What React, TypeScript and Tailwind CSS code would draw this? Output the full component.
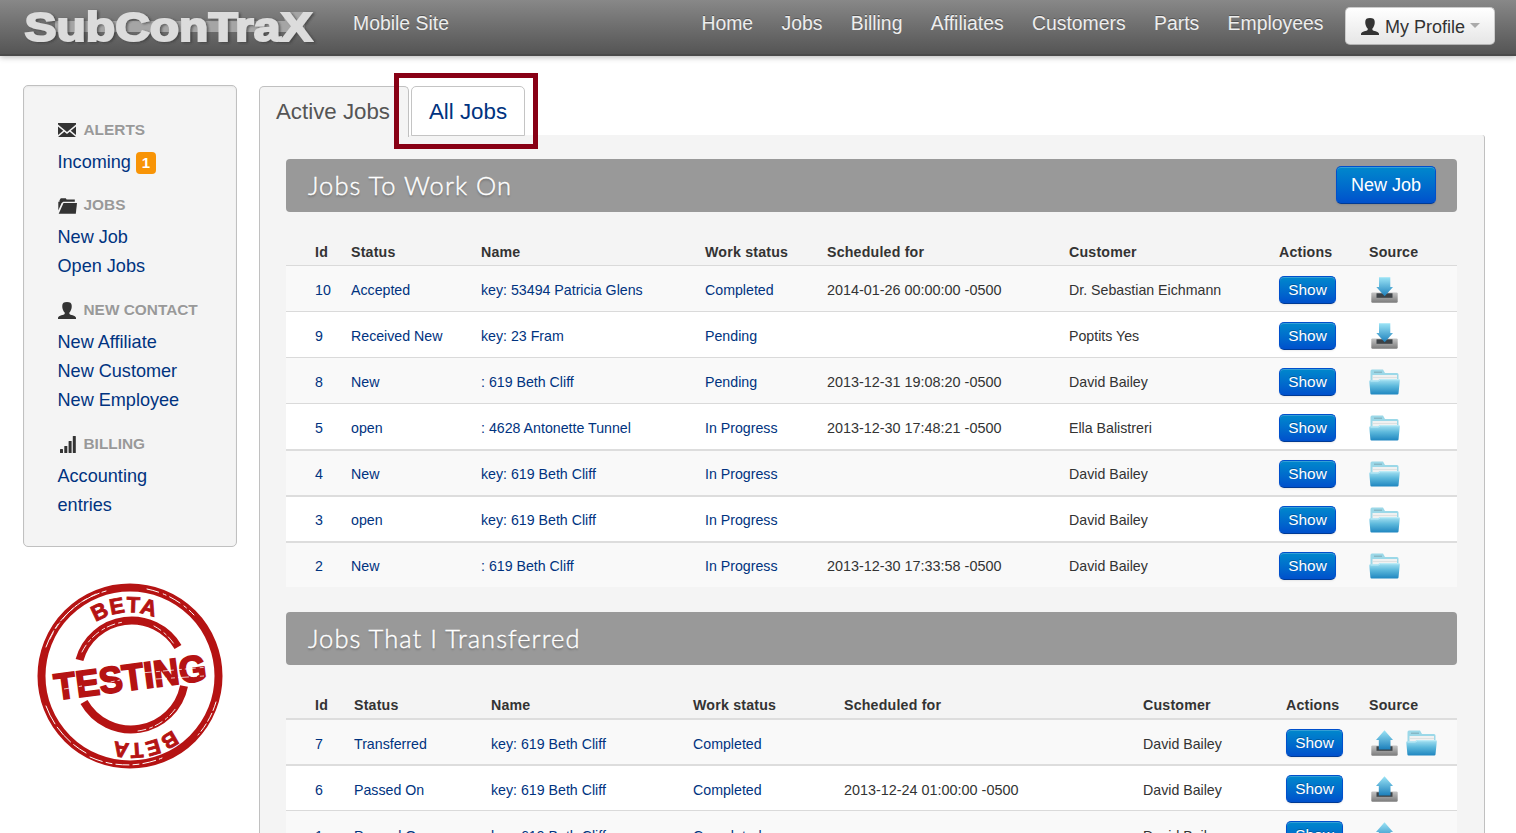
import React from "react";

type Source = "down" | "up" | "folder";
type Job = {
  id: string;
  status: string;
  name: string;
  work: string;
  date?: string;
  customer: string;
  source: Source[];
  line: string;
};

const thin = "border-t border-[#dadada]";
const thick = "border-t-2 border-[#dddddd]";

const working: Job[] = [
  { id: "10", status: "Accepted", name: "key: 53494 Patricia Glens", work: "Completed", date: "2014-01-26 00:00:00 -0500", customer: "Dr. Sebastian Eichmann", source: ["down"], line: thin },
  { id: "9", status: "Received New", name: "key: 23 Fram", work: "Pending", customer: "Poptits Yes", source: ["down"], line: thin },
  { id: "8", status: "New", name: ": 619 Beth Cliff", work: "Pending", date: "2013-12-31 19:08:20 -0500", customer: "David Bailey", source: ["folder"], line: thin },
  { id: "5", status: "open", name: ": 4628 Antonette Tunnel", work: "In Progress", date: "2013-12-30 17:48:21 -0500", customer: "Ella Balistreri", source: ["folder"], line: thin },
  { id: "4", status: "New", name: "key: 619 Beth Cliff", work: "In Progress", customer: "David Bailey", source: ["folder"], line: thick },
  { id: "3", status: "open", name: "key: 619 Beth Cliff", work: "In Progress", customer: "David Bailey", source: ["folder"], line: thick },
  { id: "2", status: "New", name: ": 619 Beth Cliff", work: "In Progress", date: "2013-12-30 17:33:58 -0500", customer: "David Bailey", source: ["folder"], line: thick },
];

const transferred: Job[] = [
  { id: "7", status: "Transferred", name: "key: 619 Beth Cliff", work: "Completed", customer: "David Bailey", source: ["up", "folder"], line: thick },
  { id: "6", status: "Passed On", name: "key: 619 Beth Cliff", work: "Completed", date: "2013-12-24 01:00:00 -0500", customer: "David Bailey", source: ["up"], line: thick },
  { id: "1", status: "Passed On", name: "key: 619 Beth Cliff", work: "Completed", customer: "David Bailey", source: ["up"], line: thin },
];

function UserIcon({ className }: { className: string }) {
  return (
    <svg viewBox="0 0 18 17" className={className} fill="#333">
      <path d="M4.300 3.500C4.300 1 6 0 9 0s4.700 1 4.700 3.500c0 .9.100 1.500-.1 2.400-.3 1.800-1.200 3.500-2.200 4.500v1.500c.5.900 6.200 1.500 6.600 3.800V17H0v-1.300c.5-2.300 6.200-2.900 6.700-3.800v-1.500C5.600 9.400 4.700 7.700 4.400 5.900c-.2-.9-.1-1.500-.1-2.400z" />
    </svg>
  );
}

function MailIcon() {
  return (
    <svg viewBox="0 0 18 14" className="h-[14px] w-[18px]" fill="#333">
      <path d="M0 0h18v1.500L9 9 0 1.500z" />
      <path d="M0 3.400 5.200 7.700 0 12zM18 3.400 12.800 7.700 18 12zM0 14l6.300-5.300L9 10.900l2.700-2.200L18 14z" />
    </svg>
  );
}

function DarkFolderIcon() {
  return (
    <svg viewBox="0 0 19 16" className="mt-[2px] h-4 w-[19px]" fill="#333">
      <path d="M1.500 2.200 2.800.3h5l.8 1.300h8.200v2.200H5.300L3.600 5 .3 12.500V3.800h1.200z" />
      <path d="M5.500 5.100H19l-1.200 10.600H.7z" />
    </svg>
  );
}

function BarsIcon() {
  return (
    <svg viewBox="0 0 16 17" className="h-[17px] w-4" fill="#333">
      <rect x="0" y="13" width="3" height="4" rx=".5" />
      <rect x="4.300" y="10" width="3" height="7" rx=".5" />
      <rect x="8.600" y="5" width="3" height="12" rx=".5" />
      <rect x="12.800" y="0" width="3" height="17" rx=".5" />
    </svg>
  );
}

function SourceIcon({ kind }: { kind: Source }) {
  if (kind === "folder")
    return (
      <svg viewBox="0 0 31 26" className="h-[26px] w-[31px] shrink-0">
        <defs>
          <linearGradient id="folderFront" x1="0" y1="0" x2="0" y2="1">
            <stop offset="0" stopColor="#a9e3f3" />
            <stop offset=".45" stopColor="#5db9dc" />
            <stop offset="1" stopColor="#1f86c0" />
          </linearGradient>
        </defs>
        <path d="M1.500 2.200Q1.500.5 3 .5H14L16 4H28Q29.500 4 29.500 5.500V20H1.500z" fill="#9bd8e8" />
        <path d="M5 3.200h8" stroke="#7fa9b5" />
        <path d="M3.500 6H28V13H3.500z" fill="#f0f1f1" />
        <path d="M3.500 8.500h24.500" stroke="#d9dddd" strokeWidth=".8" />
        <path d="M.3 12.500Q.3 11.300 1.500 11.300H9L11 10H29.500Q31 10 30.800 11.500L29.500 24.500Q29.400 25.500 28.300 25.500H2.500Q1.500 25.500 1.400 24.500z" fill="url(#folderFront)" />
        <path d="M1.500 12H9.300L11.300 10.700H30" fill="none" stroke="#c4eff8" strokeWidth=".9" />
      </svg>
    );
  return (
    <svg viewBox="0 0 31 26" className="h-[26px] w-[31px] shrink-0">
      <defs>
        <linearGradient id="arrowFill" x1="0" y1="0" x2="0" y2="1">
          <stop offset="0" stopColor="#9be4f6" />
          <stop offset="1" stopColor="#1c7fbb" />
        </linearGradient>
        <linearGradient id="trayFill" x1="0" y1="0" x2="0" y2="1">
          <stop offset="0" stopColor="#c4c4c4" />
          <stop offset="1" stopColor="#7b7b7b" />
        </linearGradient>
      </defs>
      <path d="M3.500 15.500H27.500Q28.500 15.500 28.700 16.500V24.500Q28.600 25.700 27.500 25.700H3.500Q2.300 25.700 2.300 24.500V16.500Q2.400 15.500 3.500 15.500z" fill="url(#trayFill)" />
      <rect x="7.500" y="16.300" width="16" height="4.500" fill="#3d4246" />
      {kind === "down" ? (
        <path d="M10 .3H21.300V10H24L15.700 19.300 7.300 10H10z" fill="url(#arrowFill)" />
      ) : (
        <path d="M15.500.3 24 10H21.500V19.500H9.800V10H7z" fill="url(#arrowFill)" />
      )}
    </svg>
  );
}

function Logo() {
  return (
    <svg viewBox="0 0 300 48" className="ml-[20px] h-12 w-[300px] shrink-0">
      <defs>
        <filter id="logoShadow" x="-5%" y="-20%" width="110%" height="150%">
          <feDropShadow dx="2" dy="1" stdDeviation="1" floodColor="#333" floodOpacity=".6" />
        </filter>
      </defs>
      <path d="M35 21H265L262 12H285V32H35z" fill="#a5a5a5" />
      <text x="4.500" y="41" textLength="288" lengthAdjust="spacingAndGlyphs" fontFamily="Liberation Sans, Arial, sans-serif" fontWeight="700" fontSize="41.500" fill="#dcdcdc" stroke="#dcdcdc" strokeWidth="2" filter="url(#logoShadow)">
        SubConTraX
      </text>
    </svg>
  );
}

function Stamp() {
  const face = "Liberation Sans, Arial, sans-serif";
  return (
    <svg viewBox="0 0 190 190" className="mt-[34px] ml-[13px] h-[190px] w-[190px]">
      <g fill="none" stroke="#b51313">
        <circle cx="94" cy="95" r="88.500" strokeWidth="8" />
        <path d="M43.500 79A54 54 0 0 1 142 66M48 121A54 54 0 0 0 148 105" strokeWidth="8" />
      </g>
      <g fill="none" stroke="#fff" strokeLinecap="round">
        <path d="M10 66A89 89 0 0 1 70 10" strokeWidth="1" strokeDasharray="18 3 5 4" />
        <path d="M14 58A90 90 0 0 1 60 13" strokeWidth=".8" strokeDasharray="7 5" />
        <path d="M111 8A89 89 0 0 1 158 34" strokeWidth="1" strokeDasharray="12 5 3 4" />
        <path d="M10 125A89 89 0 0 0 50 172" strokeWidth="1" strokeDasharray="20 4" />
        <path d="M54 176A91 91 0 0 0 126 177" strokeWidth="1" strokeDasharray="13 4 6 4" />
        <path d="M180 121A90 90 0 0 1 162 154" strokeWidth="1" strokeDasharray="9 3" />
        <path d="M46 71A55 55 0 0 1 88 41M118 45A56 56 0 0 1 138 63M102 150A56 56 0 0 0 140 127" strokeWidth=".9" strokeDasharray="8 4 3 3" />
      </g>
      <g fill="#b51313" fontFamily={face} fontWeight="700">
        <defs>
          <path id="arcTop" d="M36 69A63 63 0 0 1 150 66" />
          <path id="arcBottom" d="M157 124A67 67 0 0 1 38 128" />
        </defs>
        <text fontSize="22" stroke="#b51313" strokeWidth=".9">
          <textPath href="#arcTop" startOffset="47.500%" textAnchor="middle" textLength="61">BETA</textPath>
        </text>
        <text fontSize="21" stroke="#b51313" strokeWidth=".9">
          <textPath href="#arcBottom" startOffset="43%" textAnchor="middle" textLength="61">BETA</textPath>
        </text>
        <text x="0" y="0" transform="translate(20 119) rotate(-7.500)" fontSize="37" textLength="153" lengthAdjust="spacingAndGlyphs" stroke="#b51313" strokeWidth="1.800">
          TESTING
        </text>
      </g>
      <path d="M105 92 172 86M28 108 46 105M120 98 168 95M60 104 84 99" stroke="#fff" strokeWidth="1" strokeDasharray="11 4 4 3" opacity=".75" />
    </svg>
  );
}

function SideHeading({ icon, children }: { icon: React.ReactNode; children: React.ReactNode }) {
  return (
    <div className="-mt-px flex h-9 items-center pb-px text-[15.400px] font-bold text-[#999] [text-shadow:0_1px_0_rgba(255,255,255,.5)]">
      <span className="flex w-[26px] pt-px">{icon}</span>
      <span>{children}</span>
    </div>
  );
}

function SectionTitle({ children, action }: { children: React.ReactNode; action?: React.ReactNode }) {
  return (
    <div className="flex h-[53px] items-center justify-between rounded-[4px] bg-[#999] pr-[21px] pl-[22px]">
      <h2 className="font-['Lato',sans-serif] text-[25.500px] font-light tracking-[1.050px] whitespace-nowrap text-white [-webkit-text-stroke:0.4px_#fff] [text-shadow:0_2px_2px_rgba(0,0,0,.25)]">
        {children}
      </h2>
      {action}
    </div>
  );
}

function JobsTable({ jobs, columns, cell }: { jobs: Job[]; columns: string; cell: string }) {
  return (
    <div className="text-[14.200px] leading-5 whitespace-nowrap">
      <div className={`grid h-[53px] items-end pb-[3px] pl-[29px] font-bold tracking-[0.200px] text-[#333] ${cell} ${columns}`}>
        {["Id", "Status", "Name", "Work status", "Scheduled for", "Customer", "Actions", "Source"].map((h) => (
          <span key={h}>{h}</span>
        ))}
      </div>
      {jobs.map((job, i) => (
        <div key={job.id} className={`grid h-[46px] items-start pl-[29px] text-[#003380] ${job.line} ${columns} ${i % 2 ? "bg-white" : "bg-[#f9f9f9]"}`}>
          <div className={`col-span-6 grid grid-cols-subgrid ${job.line === thin ? "mt-[14px]" : "mt-[13px]"} ${cell}`}>
            <span>{job.id}</span>
            <span>{job.status}</span>
            <span>{job.name}</span>
            <span>{job.work}</span>
            <span className="text-[14.400px] text-[#333]">{job.date}</span>
            <span className="text-[#333]">{job.customer}</span>
          </div>
          <button className={`h-7 w-[57px] rounded-[5px] border border-[#0050cc] border-b-[#003a94] bg-linear-to-b from-[#0088cc] to-[#0050cc] pb-px text-[15.400px] leading-[24px] text-white shadow-[inset_0_1px_0_rgba(255,255,255,.2),0_1px_2px_rgba(0,0,0,.08)] [text-shadow:0_-1px_0_rgba(0,0,0,.25)] ${job.line === thin ? "mt-[10px]" : "mt-[9px]"}`}>
            Show
          </button>
          <span className={`flex gap-[6px] ${job.line === thin ? "pt-[11px]" : "pt-[10px]"}`}>
            {job.source.map((s) => (
              <SourceIcon key={s} kind={s} />
            ))}
          </span>
        </div>
      ))}
    </div>
  );
}

export default function App() {
  return (
    <div className="h-[833px] w-[1516px] overflow-hidden bg-white font-['Liberation_Sans',Arial,sans-serif] text-[#333]">
      <header className="flex h-14 items-start border-b-2 border-[#4b4b4b] bg-linear-to-b from-[#888] to-[#555] whitespace-nowrap shadow-[0_1px_6px_rgba(0,0,0,.3)]">
        <Logo />
        <a className="ml-[33px] pt-[9px] text-[19.400px] leading-7 text-[#eee] [text-shadow:0_-1px_0_rgba(0,0,0,.3)]">Mobile Site</a>
        <nav className="ml-auto flex gap-[28.300px] pt-[9px] text-[19.400px] leading-7 text-[#eee] [text-shadow:0_-1px_0_rgba(0,0,0,.3)]">
          {["Home", "Jobs", "Billing", "Affiliates", "Customers", "Parts", "Employees"].map((item) => (
            <a key={item}>{item}</a>
          ))}
        </nav>
        <button className="mt-[7px] mr-[21px] ml-[21.500px] flex h-[38px] w-[150px] items-center rounded-[5px] border border-[#ccc] border-b-[#b3b3b3] bg-linear-to-b from-white to-[#e6e6e6] pl-[15px] text-[18px] text-[#333]">
          <UserIcon className="h-[17px] w-[18px]" />
          <span className="ml-[6px] pt-[2px]">My Profile</span>
          <svg viewBox="0 0 10 5" className="-mt-px ml-[5px] h-[5px] w-[10px]" fill="#aaa">
            <path d="M0 0h10L5 5z" />
          </svg>
        </button>
      </header>

      <div className="flex">
        <aside className="ml-[23px] w-[214px] shrink-0 pt-[29px]">
          <div className="h-[462px] rounded-[5px] border border-[#c0c0c0] bg-[#f4f4f4] pt-[27px] pl-[33.500px] text-[18.100px] leading-[29px] text-[#003380] shadow-[inset_0_1px_2px_rgba(0,0,0,.05)]">
            <SideHeading icon={<MailIcon />}>ALERTS</SideHeading>
            <div className="flex items-center">
              Incoming
              <span className="mt-px ml-[5px] h-[22px] w-5 rounded-[4px] bg-[#f89406] text-center text-[15px] leading-[22px] font-bold text-white">1</span>
            </div>
            <div className="mt-[11px]">
              <SideHeading icon={<DarkFolderIcon />}>JOBS</SideHeading>
              <div>New Job</div>
              <div>Open Jobs</div>
            </div>
            <div className="mt-[12px]">
              <SideHeading icon={<UserIcon className="h-[17px] w-[18px]" />}>NEW CONTACT</SideHeading>
              <div>New Affiliate</div>
              <div>New Customer</div>
              <div>New Employee</div>
            </div>
            <div className="mt-[12px]">
              <SideHeading icon={<span className="pl-[2px]"><BarsIcon /></span>}>BILLING</SideHeading>
              <div>Accounting</div>
              <div>entries</div>
            </div>
          </div>
          <Stamp />
        </aside>

        <main className="ml-[22px] w-[1226px] shrink-0 pt-[30px]">
          <div className="flex h-[49px] items-start text-[22.300px] whitespace-nowrap">
            <div className="z-10 h-[51px] w-[150px] rounded-t-[5px] border border-b-0 border-[#c0c0c0] bg-[#f4f4f4] pl-[16px] leading-[49px] text-[#555]">Active Jobs</div>
            <div className="relative z-20 ml-[2px] h-[50px] w-[114px] rounded-t-[5px] border border-[#c4c4c4] bg-white pl-[17px] leading-[49px] text-[#003380]">
              All Jobs
              <div className="absolute -top-[14px] -left-[18px] h-[76px] w-[144px] border-[5px] border-[#880015]" />
            </div>
          </div>
          <div className="h-[760px] rounded-tr-[3px] border-x border-[#c0c0c0] bg-[#f4f4f4] pt-[24px] pr-[27px] pl-[26px]">
            <SectionTitle
              action={
                <button className="-mt-[2px] h-[38px] w-[100px] rounded-[5px] border border-[#0050cc] border-b-[#003a94] bg-linear-to-b from-[#0088cc] to-[#0050cc] pt-px text-[18px] text-white shadow-[inset_0_1px_0_rgba(255,255,255,.2),0_1px_2px_rgba(0,0,0,.1)]">
                  New Job
                </button>
              }
            >
              Jobs To Work On
            </SectionTitle>
            <JobsTable jobs={working} columns="grid-cols-[36px_130px_224px_122px_242px_210px_90px_88px]" cell="pt-0" />
            <div className="h-[25px]" />
            <SectionTitle>Jobs That I Transferred</SectionTitle>
            <JobsTable jobs={transferred} columns="grid-cols-[39px_137px_202px_151px_299px_143px_83px_88px]" cell="pt-px pb-[2px]" />
          </div>
        </main>
      </div>
    </div>
  );
}
